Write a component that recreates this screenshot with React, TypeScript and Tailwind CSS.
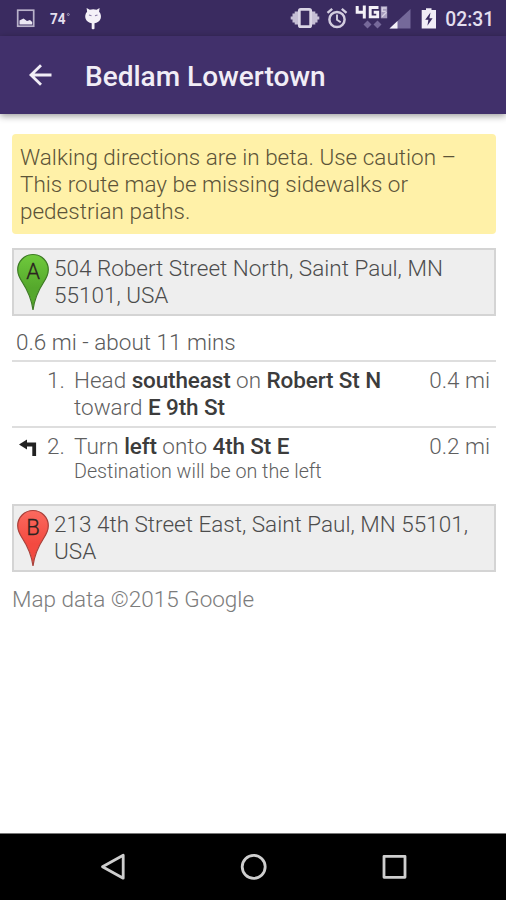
import type { ReactNode } from "react";

function StatusBar() {
  return (
    <div className="h-9 bg-[#3a2b60] text-[#e4dfee]">
      <svg width="506" height="36" viewBox="0 0 506 36" fill="none">
        {/* picture notification */}
        <rect x="17.700" y="10.200" width="16" height="16" stroke="#b9b2ca" strokeWidth="1.700" />
        <path d="M19.500 24.500v-4l4-2 3.500 2.500 3-1 2.200 2v2.500z" fill="#ece8f3" />

        <text x="50" y="24" fontSize="14" fontWeight="700" fill="currentColor" textLength="15.500" lengthAdjust="spacingAndGlyphs" className="font-['Roboto',sans-serif]">74</text>
        <circle cx="68.300" cy="14.500" r="1" stroke="#b9b2ca" strokeWidth="0.800" />

        {/* cat-eared debug icon */}
        <path
          d="M86.600 8l3.200 1.800c2.200-.8 4.600-.8 6.800 0L99.600 8l-.5 3.700c1.900 2 2.300 4.700 1.500 7-.9 2.600-3.400 4.200-6.100 4.500v5.300c0 1-2.800 1-2.800 0v-5.300c-2.700-.3-5.200-1.900-6.100-4.500-.8-2.300-.4-5 1.500-7z"
          fill="#f4f1f8"
        />
        <path d="M89 15l2.500.8M97.500 15l-2.500.8" stroke="#8a7da8" strokeWidth="1.200" />

        {/* vibrate */}
        <rect x="299.300" y="9.300" width="11.400" height="17.400" rx="1.500" stroke="#dad5e5" strokeWidth="2.800" />
        <path d="M298 11.500v13h-3.300v-2h-2.200v-3h-1.800v-3h1.800v-3h2.200v-2zM312 11.500v13h3.300v-2h2.200v-3h1.800v-3h-1.800v-3h-2.200v-2z" fill="#c6bfd5" />

        {/* alarm */}
        <circle cx="337" cy="19.500" r="7.600" stroke="#d3cddf" strokeWidth="2.500" />
        <path d="M337 14.500v5.200l3.700 2.500" stroke="#d3cddf" strokeWidth="1.900" />
        <path d="M327.500 12.800l4.700-4M346.500 12.800l-4.700-4" stroke="#d3cddf" strokeWidth="2.400" />

        {/* mobile network */}
        <path d="M357.200 6v6.200h8.300M364.300 5.500v13" stroke="#f4f1f8" strokeWidth="3" />
        <path d="M378.500 7.500h-8.300v9.400h7.500v-4.700h-4" stroke="#f4f1f8" strokeWidth="2.900" />
        <path d="M380.800 6.300h6.400v12h-6.400z" fill="#a79cbd" />
        <path d="M386.500 8h-4.200v3.300h3.500M382 16.800l4.500-4.500" stroke="#d8d1e3" strokeWidth="1.300" />
        <path d="M367.500 20.500l4 4-4 4-4-4zM377.500 20.500l4 4-4 4-4-4z" fill="#76699a" />

        <path d="M410.500 9v19.500h-21z" fill="#75699a" />
        <path d="M397.500 21v7.500h-8z" fill="#f4f1f8" />

        {/* charging battery */}
        <path d="M421.700 10h4.300V8.300h5.500V10h4.500v18.500h-14.300z" fill="#f1edf6" />
        <path d="M430.500 12.500l-5.300 7.200h3.200l-1 6 5.200-7.500h-3.200z" fill="#3a2b60" />

        <text x="445.300" y="26" fontSize="19.300" fontWeight="500" textLength="49" fill="currentColor" className="font-['Roboto',sans-serif]">02:31</text>
      </svg>
    </div>
  );
}

function TitleBar() {
  return (
    <header className="flex h-[78px] items-center bg-[#41306b] pl-7 pt-0.5 text-[#f1edf6] shadow-[0_2px_7px_rgba(0,0,0,0.4)]">
      <svg width="25" height="24" viewBox="0 0 25 24" fill="none" stroke="currentColor" strokeWidth="2.800" className="mb-0.5">
        <path d="M23.500 12H3M13 2.200L3 12l10 9.800" />
      </svg>
      <h1 className="ml-8 whitespace-nowrap pt-0.5 text-[28px] font-medium leading-8">Bedlam Lowertown</h1>
    </header>
  );
}

function Pin({ letter, fill, edge, glow }: { letter: string; fill: string; edge: string; glow: string }) {
  return (
    <svg width="34" height="58" viewBox="0 0 34 58" className="shrink-0">
      <defs>
        <linearGradient id={`pin${letter}`} x1="0" y1="0" x2="0" y2="1">
          <stop offset="0" stopColor={glow} />
          <stop offset="0.600" stopColor={fill} />
        </linearGradient>
      </defs>
      <path
        d="M17 57C15.500 45 12 38 6.500 29.500 3.500 25 1.700 21.500 1.700 16.800 1.700 8.300 8.500 1.500 17 1.500s15.300 6.800 15.300 15.300c0 4.700-1.800 8.200-4.800 12.700C22 38 18.500 45 17 57z"
        fill={`url(#pin${letter})`}
        stroke={edge}
        strokeWidth="1.200"
      />
      <text x="17" y="25.500" textAnchor="middle" fontSize="22" fill="#2b2320" stroke="#2b2320" strokeWidth="0.300" className="font-['Roboto',sans-serif]">
        {letter}
      </text>
    </svg>
  );
}

function Place({ pin, children }: { pin: ReactNode; children: ReactNode }) {
  return (
    <div className="flex h-[68px] items-start border-2 border-[#d4d4d4] bg-[#eeeeee] pl-0.5 pt-[3px] text-[#4c4c4c]">
      {pin}
      <p className="ml-1 whitespace-nowrap pt-0.5">{children}</p>
    </div>
  );
}

type StepProps = { n: number; distance: string; icon?: ReactNode; children: ReactNode };

function Step({ n, distance, icon, children }: StepProps) {
  return (
    <li className="flex border-t-2 border-[#dedede] pt-[5px] text-[#5f5f5f]">
      <span className="w-[35px] shrink-0 pl-[7px] pt-1.5">{icon}</span>
      <span className="w-[27px] shrink-0">{n}.</span>
      <div className="flex-1">{children}</div>
      <span className="mr-1.5 whitespace-nowrap">{distance}</span>
    </li>
  );
}

function B({ children }: { children: ReactNode }) {
  return <b className="font-medium tracking-[-0.130px] text-[#3c3c3c]">{children}</b>;
}

function TurnLeft() {
  return (
    <svg width="18" height="17" viewBox="0 0 18 17" fill="none">
      <path d="M7 5.500h8.200V17" stroke="#222" strokeWidth="3.800" />
      <path d="M0 5.500L8 .5v10z" fill="#222" />
    </svg>
  );
}

function NavBar() {
  return (
    <nav className="h-[67px] border-t border-[#777] bg-black">
      <svg width="506" height="66" viewBox="0 0 506 66" fill="none" stroke="#cecece" strokeWidth="2.800" strokeLinejoin="round">
        <path d="M102.500 32.700l20.700-11.500v23z" />
        <circle cx="253.700" cy="32.800" r="11.500" />
        <rect x="384" y="22.300" width="21" height="21" />
      </svg>
    </nav>
  );
}

export default function App() {
  return (
    <div className="flex h-[900px] w-[506px] flex-col overflow-hidden bg-white font-['Roboto',sans-serif]">
      <StatusBar />
      <TitleBar />
      <main className="flex-1 pl-3 pr-2.5 pt-5 text-[22.500px] font-light leading-[27px]">
        <div className="mb-3.5 h-[100px] rounded bg-[#fff1a8] px-2 pt-2.5 text-[#5c5438]">
          Walking directions are in beta. Use caution –<br />
          This route may be missing sidewalks or<br />
          pedestrian paths.
        </div>

        <Place pin={<Pin letter="A" fill="#55a82c" glow="#6fca3c" edge="#3d7a24" />}>
          504 Robert Street North, Saint Paul, MN<br />
          55101, USA
        </Place>

        <p className="mb-1 ml-1 mt-[13px] text-[#5a5a5a]">0.6 mi - about 11 mins</p>
        <ol className="mb-5">
          <Step n={1} distance="0.4 mi">
            <p className="pb-[5px]">
              Head <B>southeast</B> on <B>Robert St N</B><br />
              toward <B>E 9th St</B>
            </p>
          </Step>
          <Step n={2} distance="0.2 mi" icon={<TurnLeft />}>
            <p>Turn <B>left</B> onto <B>4th St E</B></p>
            <p className="text-[19.700px] leading-[24px]">Destination will be on the left</p>
          </Step>
        </ol>

        <Place pin={<Pin letter="B" fill="#f34a40" glow="#fb6a5f" edge="#a8403a" />}>
          213 4th Street East, Saint Paul, MN 55101,<br />
          USA
        </Place>
        <p className="mt-3.5 text-[#7c7c7c]">Map data ©2015 Google</p>
      </main>
      <NavBar />
    </div>
  );
}
